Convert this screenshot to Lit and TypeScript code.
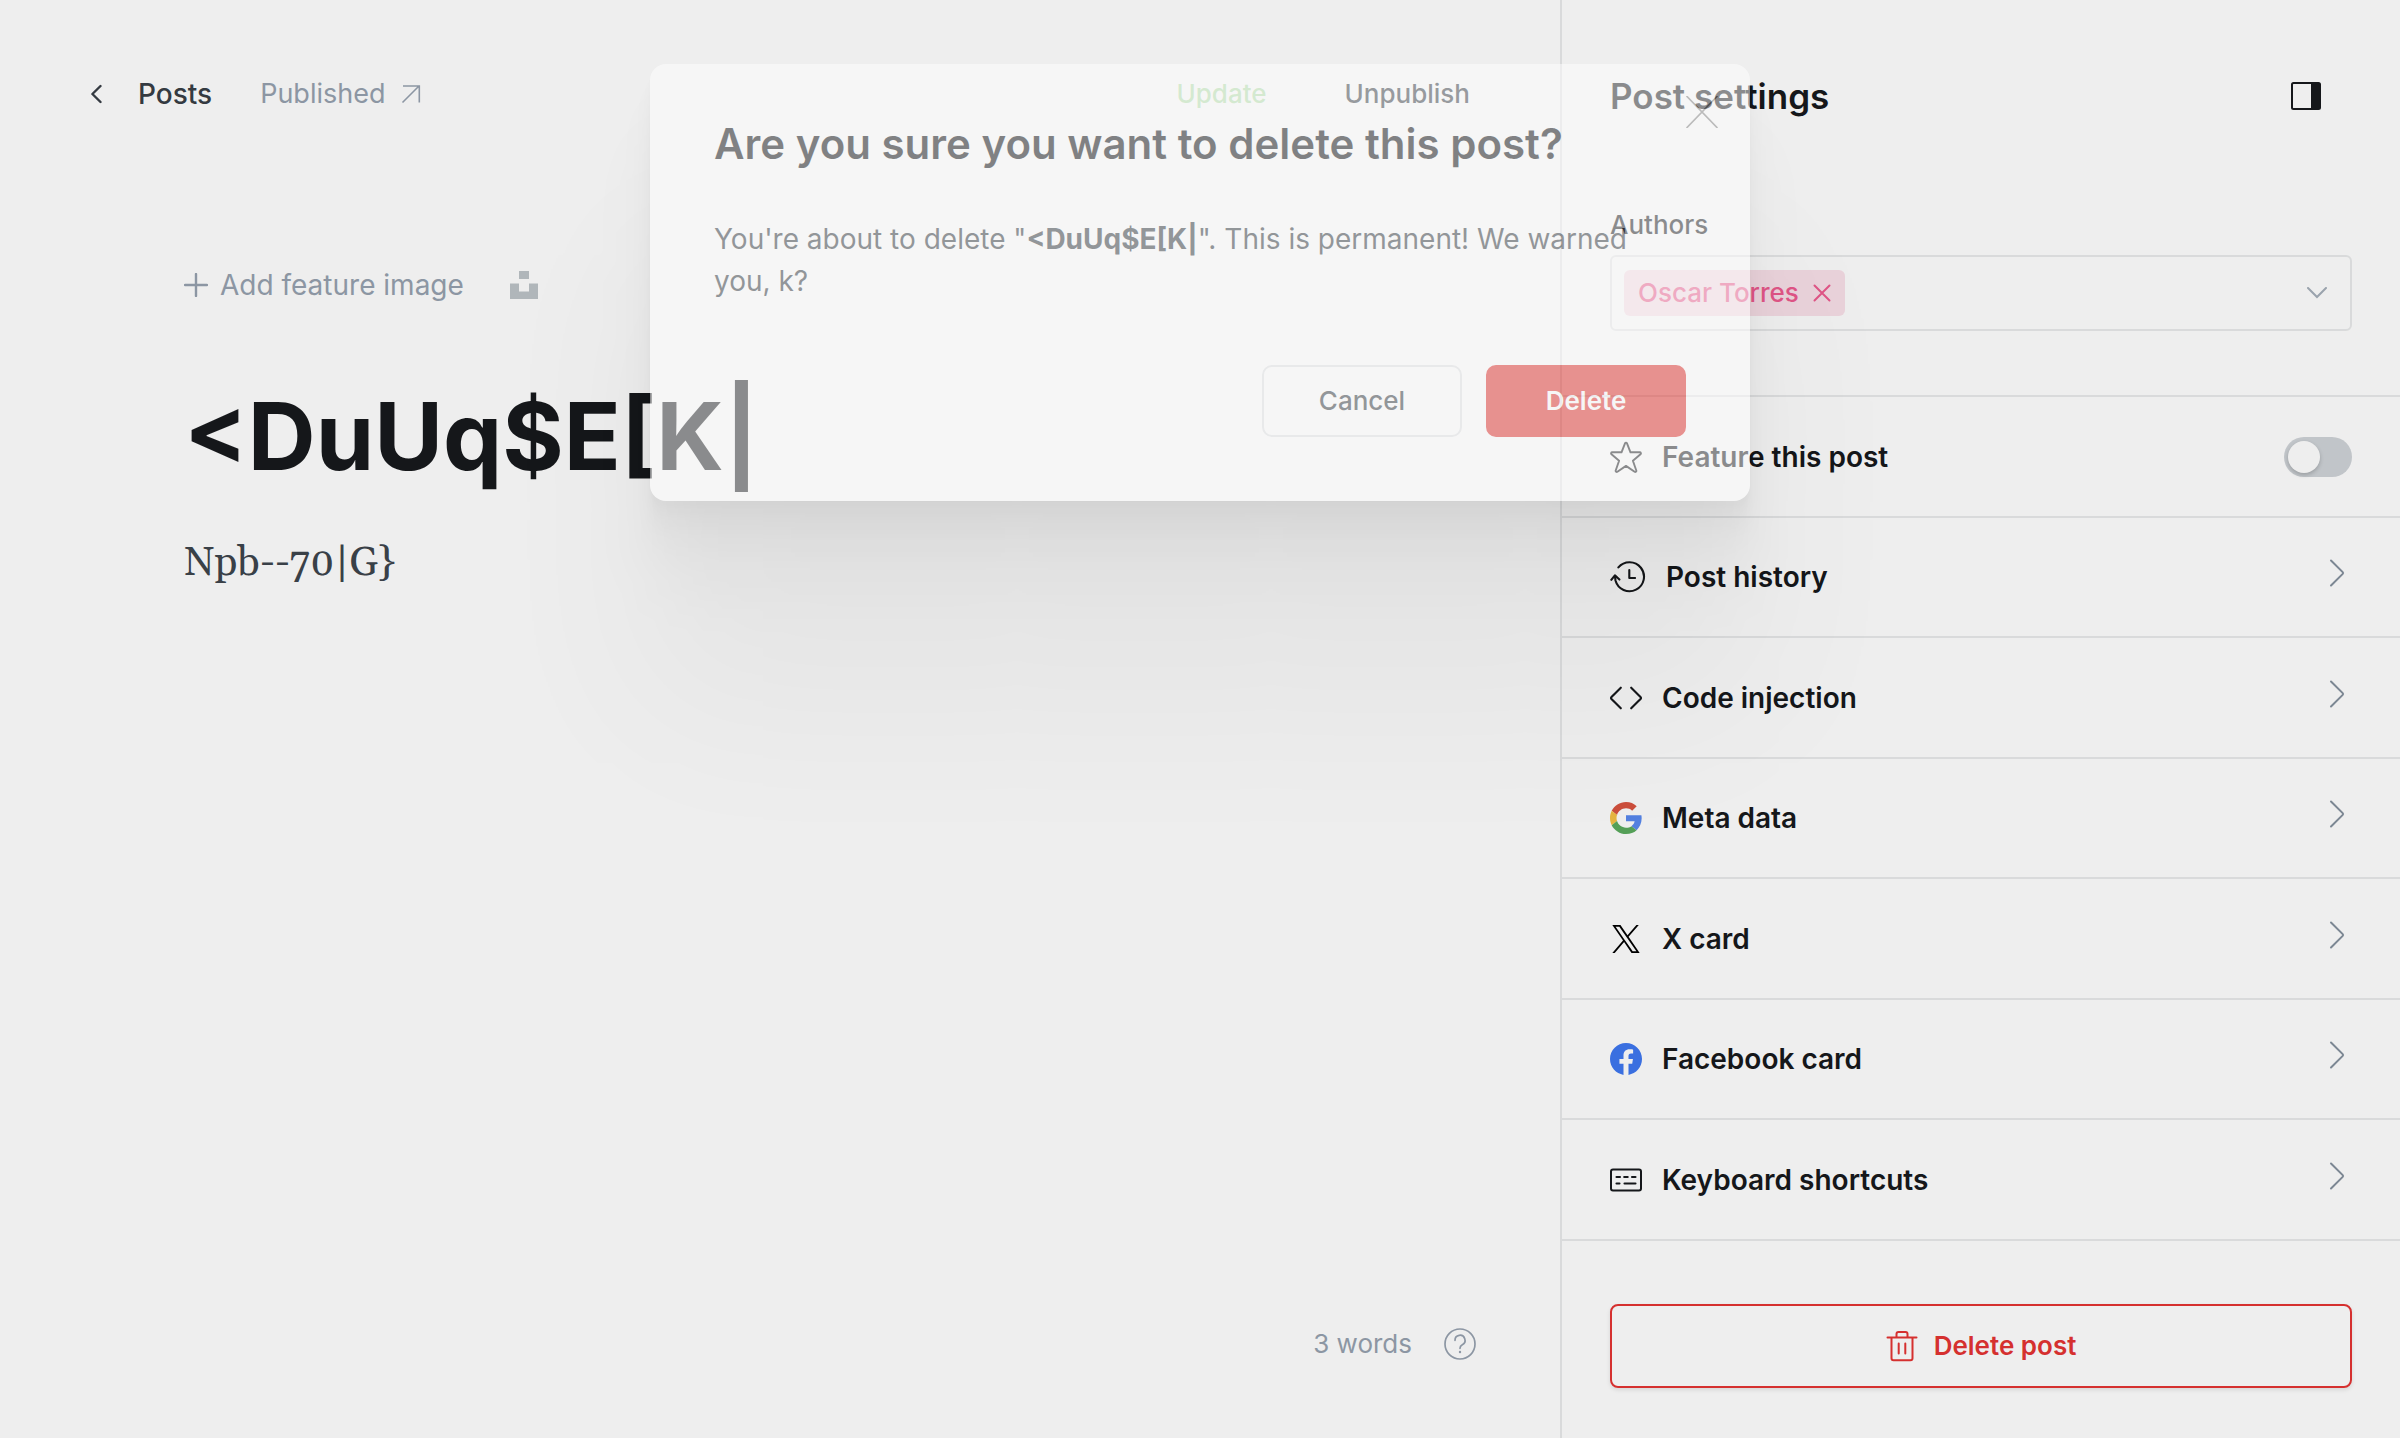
import { LitElement, html, svg, css, nothing, type TemplateResult } from "lit";
import { customElement, property, state } from "lit/decorators.js";

type IconSpec = { w: number; h: number; box: string; body: TemplateResult };

const icons: Record<string, IconSpec> = {
  back: {
    w: 12, h: 20, box: "0 0 12 20",
    body: svg`<path d="M10.5 2 2.4 10l8.1 8" fill="none" stroke="currentColor" stroke-width="2.4" stroke-linecap="round" stroke-linejoin="round"/>`,
  },
  external: {
    w: 20, h: 20, box: "0 0 20 20",
    body: svg`<path d="M1.500 18.500 18 2M2 2h16.300v16.500" fill="none" stroke="currentColor" stroke-width="1.600"/>`,
  },
  plus: {
    w: 24, h: 24, box: "0 0 24 24",
    body: svg`<path d="M12 1v22M1 12h22" fill="none" stroke="currentColor" stroke-width="2.400" stroke-linecap="round"/>`,
  },
  unsplash: {
    w: 28, h: 28, box: "0 0 28 28",
    body: svg`<path d="M9 0h10v8H9zM19 12.500h9V28H0V12.500h9v8h10z" fill="currentColor"/>`,
  },
  help: {
    w: 32, h: 32, box: "0 0 32 32",
    body: svg`<circle cx="16" cy="16" r="15" fill="none" stroke="currentColor" stroke-width="1.700"/><path d="M11 12.300a5 5 0 1 1 7.300 4.400c-1.500.8-2.300 1.700-2.300 3.600" fill="none" stroke="currentColor" stroke-width="1.700" stroke-linecap="round"/><circle cx="16" cy="24" r="1.200" fill="currentColor"/>`,
  },
  panel: {
    w: 30, h: 28, box: "0 0 30 28",
    body: svg`<rect x="1" y="1" width="28" height="26" rx="1.500" fill="none" stroke="currentColor" stroke-width="2"/><path d="M20 1h9v26h-9z" fill="currentColor"/>`,
  },
  remove: {
    w: 18, h: 18, box: "0 0 18 18",
    body: svg`<path d="m1.500 1.500 15 15m0-15-15 15" fill="none" stroke="currentColor" stroke-width="2" stroke-linecap="round"/>`,
  },
  close: {
    w: 32, h: 32, box: "0 0 32 32",
    body: svg`<path d="m1 0.500 30 31m0-31-30 31" fill="none" stroke="currentColor" stroke-width="1.700" stroke-linecap="round"/>`,
  },
  down: {
    w: 20, h: 12, box: "0 0 20 12",
    body: svg`<path d="m1 1 9 9 9-9" fill="none" stroke="currentColor" stroke-width="2" stroke-linecap="round"/>`,
  },
  right: {
    w: 16, h: 28, box: "0 0 16 28",
    body: svg`<path d="m2 1.500 11.700 11.600q.8.900 0 1.800L2 26.500" fill="none" stroke="currentColor" stroke-width="2" stroke-linecap="round"/>`,
  },
  star: {
    w: 32, h: 32, box: "0 0 32 32",
    body: svg`<path d="M16 1.600c.4 0 .8.300 1 .8l3.500 8.900h9.300c1.100 0 1.500 1.300.7 2l-7.600 6.500 3.400 9.700c.3 1-.8 1.800-1.700 1.200L16 24.900l-8.600 5.800c-.9.600-2-.2-1.700-1.200l3.400-9.700-7.600-6.500c-.8-.7-.4-2 .7-2h9.300L15 2.400c.2-.5.600-.8 1-.8z" fill="none" stroke="currentColor" stroke-width="1.900" stroke-linejoin="round"/>`,
  },
  history: {
    w: 36, h: 32, box: "0 0 36 32",
    body: svg`<path d="M8.400 6.400A14.500 14.500 0 1 1 5.500 19.500L4.900 14.700M1.300 18.800l3.600-4.500 4.500 4.300M19.300 9v8h5.800" fill="none" stroke="currentColor" stroke-width="2.100" stroke-linecap="round" stroke-linejoin="round"/>`,
  },
  code: {
    w: 32, h: 24, box: "0 0 32 24",
    body: svg`<path d="M10.800 1.700 1.500 11q-.9 1 0 2l9.300 9.300M21.200 1.700 30.500 11q.9 1 0 2l-9.300 9.300" fill="none" stroke="currentColor" stroke-width="2.100" stroke-linecap="round"/>`,
  },
  google: {
    w: 32, h: 32, box: "0 0 48 48",
    body: svg`<path fill="#cb4e3c" d="M24 9.500c3.540 0 6.710 1.220 9.210 3.600l6.850-6.850C35.900 2.380 30.470 0 24 0 14.620 0 6.510 5.380 2.560 13.220l7.980 6.190C12.430 13.720 17.740 9.500 24 9.500z"/><path fill="#5380e0" d="M47.500 24.550c0-1.570-.15-3.090-.38-4.550H24v9.020h12.940c-.58 2.960-2.260 5.480-4.780 7.180l7.730 6c4.510-4.180 7.610-10.360 7.610-17.650z"/><path fill="#e5b440" d="M10.530 28.590c-.48-1.450-.76-2.990-.76-4.590s.27-3.140.76-4.590l-7.980-6.190C.92 16.460 0 20.120 0 24c0 3.880.92 7.540 2.560 10.780l7.970-6.190z"/><path fill="#549f57" d="M24 48c6.480 0 11.930-2.130 15.890-5.810l-7.730-6c-2.150 1.450-4.920 2.300-8.160 2.300-6.260 0-11.570-4.220-13.470-9.910l-7.980 6.190C6.510 42.620 14.620 48 24 48z"/>`,
  },
  x: {
    w: 32, h: 28, box: "-85 0 1370 1227",
    body: svg`<path fill="#000" d="M714.163 519.284L1160.890 0H1055.030L667.137 450.887L357.328 0H0L468.492 681.821L0 1226.370H105.866L515.491 750.218L842.672 1226.370H1200L714.137 519.284H714.163ZM569.165 687.828L521.697 619.934L144.011 79.694H306.615L611.412 515.685L658.880 583.579L1055.080 1150.300H892.476L569.165 687.854V687.828Z"/>`,
  },
  facebook: {
    w: 32, h: 32, box: "0 0 24 24",
    body: svg`<path fill="#3a6fe0" d="M24 12.073c0-6.627-5.373-12-12-12s-12 5.373-12 12c0 5.990 4.388 10.954 10.125 11.854v-8.385H7.078v-3.470h3.047V9.430c0-3.007 1.792-4.669 4.533-4.669 1.312 0 2.686.235 2.686.235v2.953H15.830c-1.491 0-1.956.925-1.956 1.874v2.250h3.328l-.532 3.470h-2.796v8.385C19.612 23.027 24 18.062 24 12.073z"/>`,
  },
  keyboard: {
    w: 32, h: 24, box: "0 0 32 24",
    body: svg`<rect x="1" y="1.500" width="30" height="21" rx="2" fill="none" stroke="currentColor" stroke-width="2"/><path d="M6.500 9h3.500M14.200 9h3.500M22 9h3.500M6.500 15.500h3M14.500 15.500h11" fill="none" stroke="currentColor" stroke-width="2.100" stroke-linecap="round"/>`,
  },
  trash: {
    w: 32, h: 32, box: "0 0 32 32",
    body: svg`<path d="M1.500 7.500h29M5.500 7.500v20.700q0 2 2 2h17q2 0 2-2V7.500M10.500 7.500V4q0-2 2-2h7q2 0 2 2v3.500M12.700 13.500v10M19.300 13.500v10" fill="none" stroke="currentColor" stroke-width="2" stroke-linecap="round" stroke-linejoin="round"/>`,
  },
};

const icon = (name: string) => {
  const i = icons[name];
  return html`<svg class="icon" width=${i.w} height=${i.h} viewBox=${i.box} aria-hidden="true">${i.body}</svg>`;
};

const base = css`
  * { box-sizing: border-box; }
  :host { font-family: Inter, "Liberation Sans", sans-serif; font-size: 28px; line-height: 40px; }
  button, input { font: inherit; color: inherit; background: none; border: 0; padding: 0; margin: 0; }
  button { cursor: pointer; }
  a { color: inherit; text-decoration: none; }
  h1, h2, p { margin: 0; }
  .icon { display: block; flex: none; }
`;

@customElement("post-editor")
class PostEditor extends LitElement {
  @property() title = "";

  static styles = [base, css`
    :host { display: flex; flex-direction: column; min-width: 0; }
    .bar { display: flex; align-items: center; height: 60px; margin-top: 64px; padding: 0 90px; }
    .back { display: flex; align-items: center; gap: 36px; font-weight: 500; color: #343a41; }
    .status { display: flex; align-items: center; gap: 16px; margin-left: 48px; font-size: 27px; color: #8c96a3; }
    .actions { display: flex; gap: 78px; margin-left: auto; font-size: 26px; font-weight: 500; color: #2f353c; }
    .update { color: #a9d3a2; }
    .canvas { display: flex; flex-direction: column; padding: 141px 184px 0; }
    .feature { display: flex; align-items: center; gap: 46px; color: #8c96a3; }
    .add { display: flex; align-items: center; gap: 12px; }
    .unsplash { color: #b0b6ba; }
    .title { width: 100%; margin-top: 75px; height: 112px; font-size: 94px; line-height: 112px; font-weight: 700; color: #15171a; outline: 0; }
    .body { margin-top: 42px; font: 40px/60px Georgia, Gelasio, "Liberation Serif", serif; color: #394047; }
    .foot { display: flex; justify-content: flex-end; align-items: center; gap: 32px; margin-top: auto; padding: 0 84px 74px; font-size: 26px; color: #8c96a3; }
  `];

  render() {
    return html`
      <header class="bar">
        <a class="back" href="#posts">${icon("back")}Posts</a>
        <a class="status" href="#published">Published ${icon("external")}</a>
        <div class="actions">
          <button class="update">Update</button>
          <button>Unpublish</button>
        </div>
      </header>
      <main class="canvas">
        <div class="feature">
          <button class="add">${icon("plus")}Add feature image</button>
          <button class="unsplash" aria-label="Unsplash">${icon("unsplash")}</button>
        </div>
        <input class="title" aria-label="Post title" .value=${this.title} />
        <p class="body">Npb--70|G}</p>
      </main>
      <footer class="foot">
        <span>3 words</span>
        <a href="#help" aria-label="Help">${icon("help")}</a>
      </footer>
    `;
  }
}

@customElement("settings-panel")
class SettingsPanel extends LitElement {
  private rows = [
    ["history", "Post history"],
    ["code", "Code injection"],
    ["google", "Meta data"],
    ["x", "X card"],
    ["facebook", "Facebook card"],
    ["keyboard", "Keyboard shortcuts"],
  ];

  static styles = [base, css`
    :host { display: block; border-left: 2px solid #d9dadb; color: #15171a; }
    .head { display: flex; align-items: center; justify-content: space-between; height: 64px; margin: 64px 79px 81px 48px; }
    .head h2 { font-size: 35px; font-weight: 600; }
    .field { display: flex; flex-direction: column; gap: 14px; margin: 0 48px 64px; }
    .label { font-size: 26px; line-height: 32px; font-weight: 500; }
    .picker { display: flex; align-items: center; justify-content: space-between; height: 76px; padding: 0 23px 0 12px; border: 2px solid #d9dadb; border-radius: 6px; color: #9aa3ad; }
    .tag { display: flex; align-items: center; gap: 14px; height: 46px; padding: 0 14px; border-radius: 6px; background: #e9d2da; color: #df5586; font-size: 26px; font-weight: 500; }
    .list { display: flex; flex-direction: column; border-top: 2px solid #d9dadb; }
    .row { display: flex; align-items: center; gap: 20px; height: 120px; padding: 0 48px; border-bottom: 2px solid #d9dadb; font-weight: 600; text-align: left; }
    .row:nth-child(odd) { height: 121px; }
    .row .end { margin-left: auto; padding: 0 7px 8px 0; color: #7c8793; }
    .switch { appearance: none; width: 68px; height: 40px; margin: 0 0 0 auto; padding: 4px; border-radius: 20px; background: #c1c5c9; cursor: pointer; }
    .switch::before { content: ""; display: block; width: 32px; height: 32px; border-radius: 50%; background: #eee; box-shadow: 0 2px 4px rgba(0, 0, 0, 0.2); }
    .switch:checked::before { margin-left: auto; }
    .delete { display: flex; align-items: center; justify-content: center; gap: 16px; width: calc(100% - 96px); height: 84px; margin: 63px 48px 40px; border: 2px solid #d5302f; border-radius: 8px; color: #d5302f; font-size: 26px; font-weight: 600; box-shadow: 0 2px 4px rgba(0, 0, 0, 0.1); }
  `];

  render() {
    return html`
      <div class="head">
        <h2>Post settings</h2>
        <button aria-label="Toggle settings">${icon("panel")}</button>
      </div>
      <div class="field">
        <span class="label" id="authors">Authors</span>
        <div class="picker" role="group" aria-labelledby="authors">
          <button class="tag">Oscar Torres ${icon("remove")}</button>
          <button aria-label="Choose authors">${icon("down")}</button>
        </div>
      </div>
      <div class="list">
        <label class="row">${icon("star")}Feature this post<input class="switch" type="checkbox" /></label>
        ${this.rows.map(([name, label]) => html`
          <button class="row">${icon(name)}${label}<span class="end">${icon("right")}</span></button>
        `)}
      </div>
      <button class="delete">${icon("trash")}Delete post</button>
    `;
  }
}

@customElement("confirm-dialog")
class ConfirmDialog extends LitElement {
  @property() subject = "";

  static styles = [base, css`
    :host { position: absolute; inset: 0; display: flex; justify-content: center; align-items: flex-start; padding-top: 64px; }
    .dialog {
      position: relative; width: 1100px; max-width: 100%; padding: 56px 64px 64px; border-radius: 16px; background: #fff; opacity: 0.5;
      box-shadow: 0 6px 4px rgba(0, 0, 0, 0.02), 0 13px 11px rgba(0, 0, 0, 0.028), 0 25px 20px rgba(0, 0, 0, 0.035),
        0 45px 36px rgba(0, 0, 0, 0.042), 0 84px 67px rgba(0, 0, 0, 0.05), 0 200px 160px rgba(0, 0, 0, 0.07);
    }
    h1 { font-size: 42px; line-height: 48px; font-weight: 600; color: #15171a; }
    p { margin-top: 50px; line-height: 42px; color: #394047; }
    .close { position: absolute; top: 32px; right: 32px; color: #8a8a8a; }
    .buttons { display: flex; justify-content: flex-end; gap: 24px; margin-top: 63px; }
    .btn { width: 200px; height: 72px; border: 2px solid #e3e5e7; border-radius: 10px; font-size: 26px; font-weight: 500; color: #394047; }
    .danger { border-color: #e23632; background: #e23632; color: #fff; font-weight: 600; }
  `];

  private dismiss() {
    this.dispatchEvent(new CustomEvent("dismiss"));
  }

  render() {
    return html`
      <section class="dialog" role="dialog" aria-modal="true" aria-labelledby="heading">
        <h1 id="heading">Are you sure you want to delete this post?</h1>
        <button class="close" aria-label="Close" @click=${this.dismiss}>${icon("close")}</button>
        <p>You're about to delete "<strong>${this.subject}</strong>". This is permanent! We warned you, k?</p>
        <div class="buttons">
          <button class="btn" @click=${this.dismiss}>Cancel</button>
          <button class="btn danger" @click=${this.dismiss}>Delete</button>
        </div>
      </section>
    `;
  }
}

@customElement("app-root")
class AppRoot extends LitElement {
  @state() private confirming = true;
  private postTitle = "<DuUq$E[K|";

  static styles = [css`
    :host { position: relative; display: grid; grid-template-columns: minmax(0, 1fr) 840px; min-height: 100vh; overflow: hidden; background: #eee; }
  `];

  render() {
    return html`
      <post-editor .title=${this.postTitle}></post-editor>
      <settings-panel></settings-panel>
      ${this.confirming
        ? html`<confirm-dialog .subject=${this.postTitle} @dismiss=${() => (this.confirming = false)}></confirm-dialog>`
        : nothing}
    `;
  }
}
